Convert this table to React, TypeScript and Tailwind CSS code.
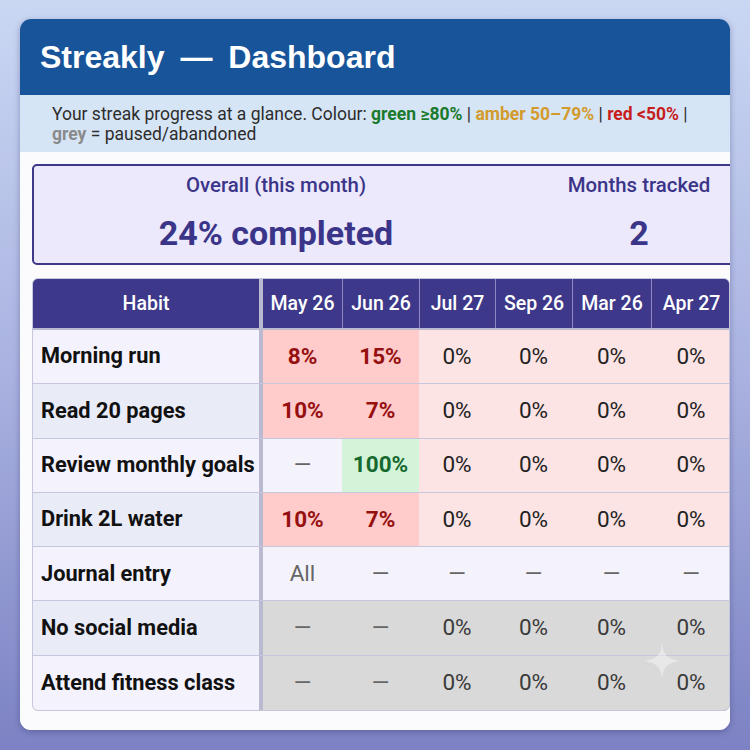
import React from 'react'

type Tone = 'red' | 'pink' | 'green' | 'plain' | 'grey'

interface Cell {
  value: string
  tone: Tone
}

interface HabitRow {
  name: string
  cells: Cell[]
}

const months = ['May 26', 'Jun 26', 'Jul 27', 'Sep 26', 'Mar 26', 'Apr 27']

const r = (value: string): Cell => ({ value, tone: 'red' })
const p = (value: string): Cell => ({ value, tone: 'pink' })
const g = (value: string): Cell => ({ value, tone: 'green' })
const n = (value: string): Cell => ({ value, tone: 'plain' })
const gr = (value: string): Cell => ({ value, tone: 'grey' })

const rows: HabitRow[] = [
  { name: 'Morning run', cells: [r('8%'), r('15%'), p('0%'), p('0%'), p('0%'), p('0%')] },
  { name: 'Read 20 pages', cells: [r('10%'), r('7%'), p('0%'), p('0%'), p('0%'), p('0%')] },
  { name: 'Review monthly goals', cells: [n('—'), g('100%'), p('0%'), p('0%'), p('0%'), p('0%')] },
  { name: 'Drink 2L water', cells: [r('10%'), r('7%'), p('0%'), p('0%'), p('0%'), p('0%')] },
  { name: 'Journal entry', cells: [n('All'), n('—'), n('—'), n('—'), n('—'), n('—')] },
  { name: 'No social media', cells: [gr('—'), gr('—'), gr('0%'), gr('0%'), gr('0%'), gr('0%')] },
  { name: 'Attend fitness class', cells: [gr('—'), gr('—'), gr('0%'), gr('0%'), gr('0%'), gr('0%')] },
]

const cols = 'grid grid-cols-[226px_4px_79px_77px_76px_77px_79px_80px]'

function ValueCell({ cell }: { cell: Cell }) {
  const dash = cell.value === '—' || cell.value === 'All'
  let cls = 'bg-[#f4f3fc] text-[#666]'
  if (cell.tone === 'red') cls = 'bg-[#ffcbcb] text-[#961010] font-bold'
  if (cell.tone === 'green') cls = 'bg-[#d3f4d8] text-[#17692f] font-bold'
  if (cell.tone === 'pink') cls = 'bg-[#fde4e4] text-[#222]'
  if (cell.tone === 'grey') cls = `bg-[#d9d9d9] ${dash ? 'text-[#666]' : 'text-[#3a3a3a]'}`
  return (
    <div className={`flex items-center justify-center text-[22.5px] ${cls}`}>
      {cell.value}
    </div>
  )
}

export default function App() {
  return (
    <div
      className="w-[750px] h-[750px] bg-gradient-to-b from-[#cad7f3] via-[#a9b2e0] to-[#7c82c3] pt-[19px] pl-[20px]"
      style={{ fontFamily: 'Roboto, "Noto Sans", sans-serif' }}
    >
      <div className="relative w-[710px] h-[711px] rounded-[11px] overflow-hidden bg-[#f6f5fc] shadow-[0_2px_6px_rgba(40,40,100,0.35)] flex flex-col">
        {/* Header */}
        <div className="h-[76px] bg-[#17549a] flex items-center px-5 shrink-0">
          <h1 className="text-white text-[32px] font-bold font-['Liberation_Sans',Arial,sans-serif] [word-spacing:7px] whitespace-nowrap">
            Streakly — Dashboard
          </h1>
        </div>

        {/* Legend band */}
        <div className="h-[57px] bg-[#d6e5f6] px-8 flex items-center shrink-0">
          <p className="text-[17.5px] leading-[20px] text-[#2c2c2c]">
            Your streak progress at a glance. Colour:{' '}
            <span className="font-bold text-[#1a7a2c]">green ≥80%</span> |{' '}
            <span className="font-bold text-[#d39a2c]">amber 50–79%</span> |{' '}
            <span className="font-bold text-[#c81d1d]">red &lt;50%</span> |{' '}
            <span className="font-bold text-[#8a8a8a]">grey</span> = paused/abandoned
          </p>
        </div>

        <div className="bg-white/60 pl-3 pt-3 flex-1">
          {/* Summary */}
          <div className="w-[730px] h-[101px] rounded-[5px] border-2 border-[#3d3889] bg-[#ebe9fb] grid grid-cols-[2fr_1fr] text-[#3b3589]">
            <div className="flex flex-col items-center pt-[6px]">
              <div className="text-[20.4px] font-medium leading-[26px]">Overall (this month)</div>
              <div className="text-[34px] font-bold leading-[42px] mt-[14px]">24% completed</div>
            </div>
            <div className="flex flex-col items-center pt-[6px]">
              <div className="text-[20.4px] font-medium leading-[26px]">Months tracked</div>
              <div className="text-[34px] font-bold leading-[42px] mt-[14px]">2</div>
            </div>
          </div>

          {/* Table */}
          <div className="mt-[13px] w-[698px] rounded-[6px] overflow-hidden border border-[#c6c7dc] bg-[#b9bad0]">
            <div className={`${cols} h-[49px] text-white text-[19.5px] font-medium`}>
              <div className="bg-[#3d3889] flex items-center justify-center">Habit</div>
              <div className="bg-[#b9bad0]" />
              {months.map((m, i) => (
                <div
                  key={m}
                  className={`bg-[#3d3889] flex items-center justify-center ${i > 0 ? 'border-l border-[#8c88c2]' : ''}`}
                >
                  {m}
                </div>
              ))}
            </div>
            <div className="h-[2px] bg-[#b9bad0]" />
            {rows.map((row, ri) => (
              <div
                key={row.name}
                className={`${cols} h-[54.3px] ${ri < rows.length - 1 ? 'border-b border-[#c6c7dc]' : ''}`}
              >
                <div
                  className={`flex items-center pl-2 text-[21.75px] font-bold text-[#111] whitespace-nowrap ${
                    ri % 2 === 0 ? 'bg-[#f4f3fd]' : 'bg-[#e9ebf7]'
                  }`}
                >
                  {row.name}
                </div>
                <div className="bg-[#b9bad0]" />
                {row.cells.map((c, ci) => (
                  <ValueCell key={ci} cell={c} />
                ))}
              </div>
            ))}
          </div>
        </div>

        {/* faint sparkle mark */}
        <svg
          className="absolute left-[625px] top-[624px] pointer-events-none"
          width="34"
          height="36"
          viewBox="0 0 34 36"
        >
          <path d="M17 0 C18 11 22 16 34 18 C22 20 18 25 17 36 C16 25 12 20 0 18 C12 16 16 11 17 0 Z" fill="white" fillOpacity="0.4" />
        </svg>
      </div>
    </div>
  )
}
